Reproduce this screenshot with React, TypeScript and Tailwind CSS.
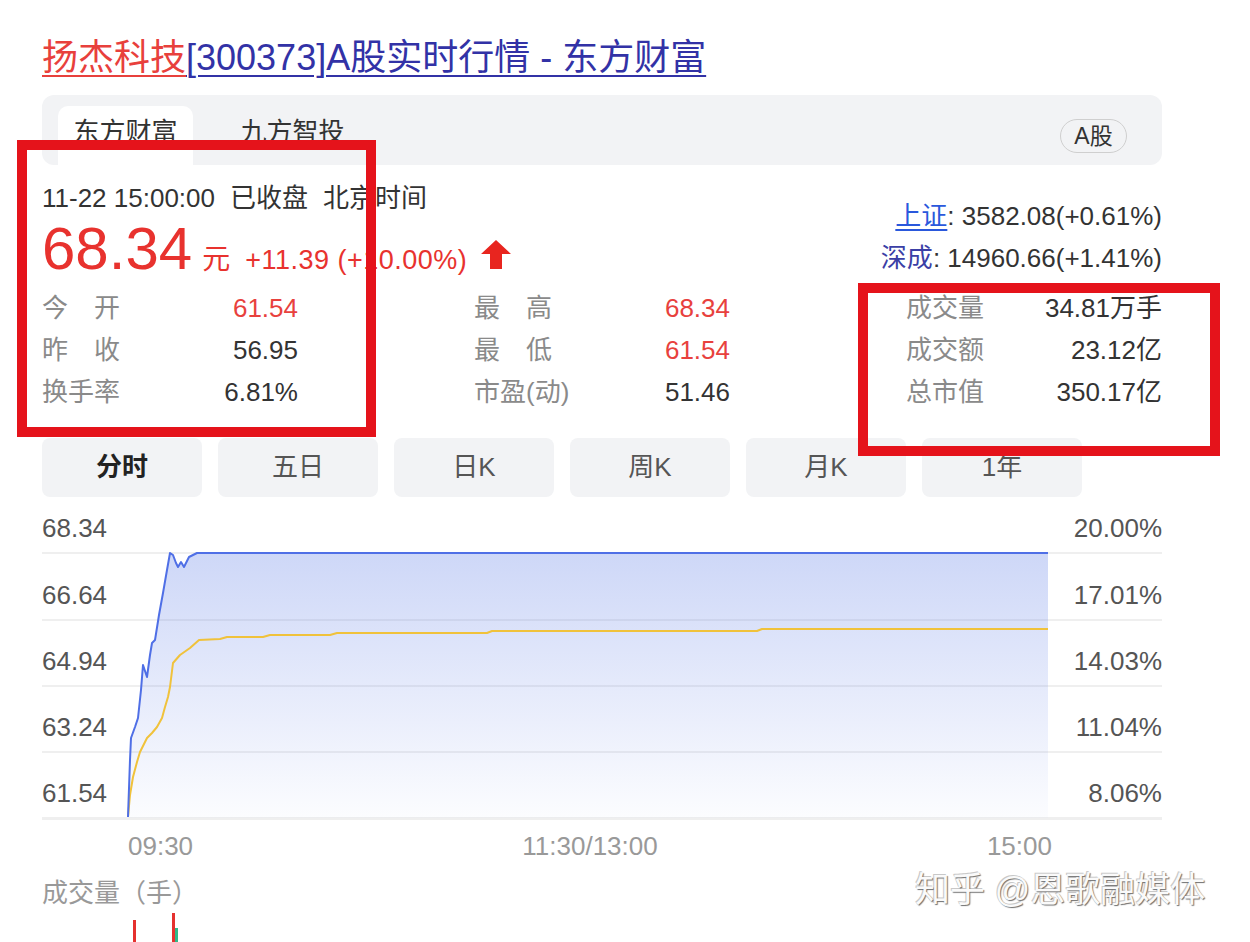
import React from "react";

type Pt = [number, number];

// chart points, page coordinates
const bluePts: Pt[] = [
  [128, 817], [130, 760], [131, 738], [135, 727], [138, 718], [141, 690], [143, 665],
  [147, 677], [150, 655], [152, 643], [155, 640], [159, 615], [163, 593], [167, 570],
  [170, 553], [173, 555], [176, 563], [178, 567], [181, 562], [184, 567], [189, 557],
  [197, 553], [1048, 553],
];

const yellowPts: Pt[] = [
  [128, 817], [130, 795], [133, 777], [137, 762], [140, 752], [147, 738], [152, 733],
  [157, 727], [162, 718], [165, 707], [168, 697], [170, 687], [173, 663], [180, 655],
  [190, 648], [199, 640], [220, 639], [227, 637], [263, 637], [270, 635], [330, 635],
  [337, 633], [487, 633], [492, 631], [757, 631], [762, 629], [1048, 629],
];

const OX = 42;
const OY = 497;
const toSvg = (pts: Pt[]) => pts.map(([x, y]) => `${x - OX},${y - OY}`).join(" ");

const Label = ({ text }: { text: string }) => {
  if (text.length === 2) {
    return (
      <span className="flex w-[78px] justify-between text-[#8a8a8a]">
        <span>{text[0]}</span>
        <span>{text[1]}</span>
      </span>
    );
  }
  return <span className="text-[#8a8a8a]">{text}</span>;
};

const stats = [
  { label: "今开", value: "61.54", red: true },
  { label: "最高", value: "68.34", red: true },
  { label: "成交量", value: "34.81万手", red: false },
  { label: "昨收", value: "56.95", red: false },
  { label: "最低", value: "61.54", red: true },
  { label: "成交额", value: "23.12亿", red: false },
  { label: "换手率", value: "6.81%", red: false },
  { label: "市盈(动)", value: "51.46", red: false },
  { label: "总市值", value: "350.17亿", red: false },
];

const periods = ["分时", "五日", "日K", "周K", "月K", "1年"];

const axis = [
  { left: "68.34", right: "20.00%", h: "h-[57px] border-b-2" },
  { left: "66.64", right: "17.01%", h: "h-[67px] border-b-2" },
  { left: "64.94", right: "14.03%", h: "h-[66px] border-b-2" },
  { left: "63.24", right: "11.04%", h: "h-[66px] border-b-2" },
  { left: "61.54", right: "8.06%", h: "h-[67px] border-b-[3px]" },
];

export default function App() {
  return (
    <div className="relative h-[942px] w-[1250px] overflow-hidden bg-white text-[#333] [font-family:'Liberation_Sans','Noto_Sans_CJK_SC',sans-serif]">
      <div className="ml-[42px] w-[1120px]">
        {/* title */}
        <h1 className="pt-[38px] text-[36px] leading-[40px] whitespace-nowrap">
          <a className="text-[#e8403c] underline decoration-2 underline-offset-[5px]">扬杰科技</a>
          <a className="text-[#3232a6] underline decoration-2 underline-offset-[5px]">[300373]A股实时行情 - 东方财富</a>
        </h1>

        {/* source tabs */}
        <div className="mt-[17px] flex h-[70px] items-end rounded-[12px] bg-[#f2f3f5] px-[16px]">
          <div className="flex h-[59px] w-[135px] items-center justify-center rounded-t-[10px] bg-white pb-[6px] text-[26px] text-[#333]">
            东方财富
          </div>
          <div className="ml-[32px] flex h-[59px] w-[135px] items-center justify-center pb-[6px] text-[26px] text-[#333]">
            九方智投
          </div>
          <div className="mb-[12px] mr-[19px] ml-auto flex h-[34px] w-[67px] items-center justify-center rounded-full border-[1.5px] border-[#cfcfcf] text-[23px] text-[#333]">
            A股
          </div>
        </div>

        {/* quote header */}
        <div className="flex h-[122px] justify-between pt-[15px]">
          <div>
            <div className="h-[36px] text-[26px] leading-[36px] whitespace-nowrap">
              11-22 15:00:00<span className="ml-[15px]">已收盘</span>
              <span className="ml-[15px]">北京时间</span>
            </div>
            <div className="flex h-[62px] items-baseline pt-[3px] text-[#e8322e]">
              <span className="text-[60px] leading-none">68.34</span>
              <span className="ml-[10px] text-[28px] leading-none">元</span>
              <span className="ml-[15px] text-[27px] leading-none tracking-[0.5px]">+11.39 (+10.00%)</span>
              <svg className="ml-[14px]" width="30" height="29" viewBox="0 0 30 29">
                <path d="M15 0 L30 14 L21 14 L21 29 L9 29 L9 14 L0 14 Z" fill="#e8251f" />
              </svg>
            </div>
          </div>
          <div className="pt-[15px] text-right text-[26px] leading-[42px]">
            <div className="h-[42px]">
              <a className="text-[#2a58dc] underline decoration-2 underline-offset-[4px]">上证</a>: 3582.08(+0.61%)
            </div>
            <div className="h-[42px]">
              <span className="text-[#3b3fa6]">深成</span>: 14960.66(+1.41%)
            </div>
          </div>
        </div>

        {/* stats */}
        <div className="grid grid-cols-3 gap-x-[176px] text-[26px]">
          {stats.map((s) => (
            <div key={s.label} className="flex h-[42px] items-center justify-between">
              <Label text={s.label} />
              <span className={s.red ? "text-[#e8413d]" : "text-[#333]"}>{s.value}</span>
            </div>
          ))}
        </div>

        {/* periods */}
        <div className="mt-[25px] flex gap-[16px]">
          {periods.map((p, i) => (
            <div
              key={p}
              className={
                i === 0
                  ? "flex h-[59px] w-[160px] items-center justify-center rounded-[8px] bg-[#f2f3f5] text-[26px] font-bold text-[#222]"
                  : "flex h-[59px] w-[160px] items-center justify-center rounded-[8px] bg-[#f2f3f5] text-[26px] text-[#555]"
              }
            >
              {p}
            </div>
          ))}
        </div>

        {/* chart */}
        <div className="relative">
          {axis.map((a) => (
            <div
              key={a.left}
              className={a.h + " flex items-end justify-between border-[#efefef] pb-[11px] text-[26px] leading-[26px] text-[#555]"}
            >
              <span>{a.left}</span>
              <span>{a.right}</span>
            </div>
          ))}
          <svg className="pointer-events-none absolute top-0 left-0" width="1120" height="323" viewBox="0 0 1120 323">
            <defs>
              <linearGradient id="fill" x1="0" y1="56" x2="0" y2="321" gradientUnits="userSpaceOnUse">
                <stop offset="0" stopColor="#5b7be6" stopOpacity="0.3" />
                <stop offset="1" stopColor="#5b7be6" stopOpacity="0.02" />
              </linearGradient>
            </defs>
            <polygon points={`${toSvg(bluePts)} ${1048 - OX},${818 - OY} ${128 - OX},${818 - OY}`} fill="url(#fill)" />
            <polyline points={toSvg(yellowPts)} fill="none" stroke="#f0c23b" strokeWidth="2" strokeLinejoin="round" />
            <polyline points={toSvg(bluePts)} fill="none" stroke="#4f6fe6" strokeWidth="2" strokeLinejoin="round" />
          </svg>
        </div>

        {/* time axis */}
        <div className="ml-[86px] flex h-[50px] w-[924px] justify-between pt-[13px] text-[26px] leading-[26px] text-[#999]">
          <span>09:30</span>
          <span>11:30/13:00</span>
          <span>15:00</span>
        </div>

        {/* volume */}
        <div className="mt-[10px] text-[26px] leading-[26px] text-[#999]">成交量（手）</div>
        <svg width="300" height="40" viewBox="0 0 300 40">
          <rect x="91" y="14" width="3" height="26" fill="#e5312f" />
          <rect x="130" y="7" width="3" height="33" fill="#e5312f" />
          <rect x="133" y="22" width="3" height="18" fill="#2fb98a" />
        </svg>
      </div>

      {/* watermark */}
      <div className="absolute top-[870px] left-[915px] text-[35px] leading-[40px] whitespace-nowrap text-[#fafafa] [text-shadow:1px_1px_1px_#6f6f6f,-1px_-1px_0_#c8c8c8]">
        知乎 @恩歌融媒体
      </div>

      {/* annotation boxes */}
      <div className="absolute top-[140px] left-[17px] h-[297px] w-[359px] border-[10px] border-[#e5131b]" />
      <div className="absolute top-[283px] left-[858px] h-[173px] w-[362px] border-[10px] border-[#e5131b]" />
    </div>
  );
}
